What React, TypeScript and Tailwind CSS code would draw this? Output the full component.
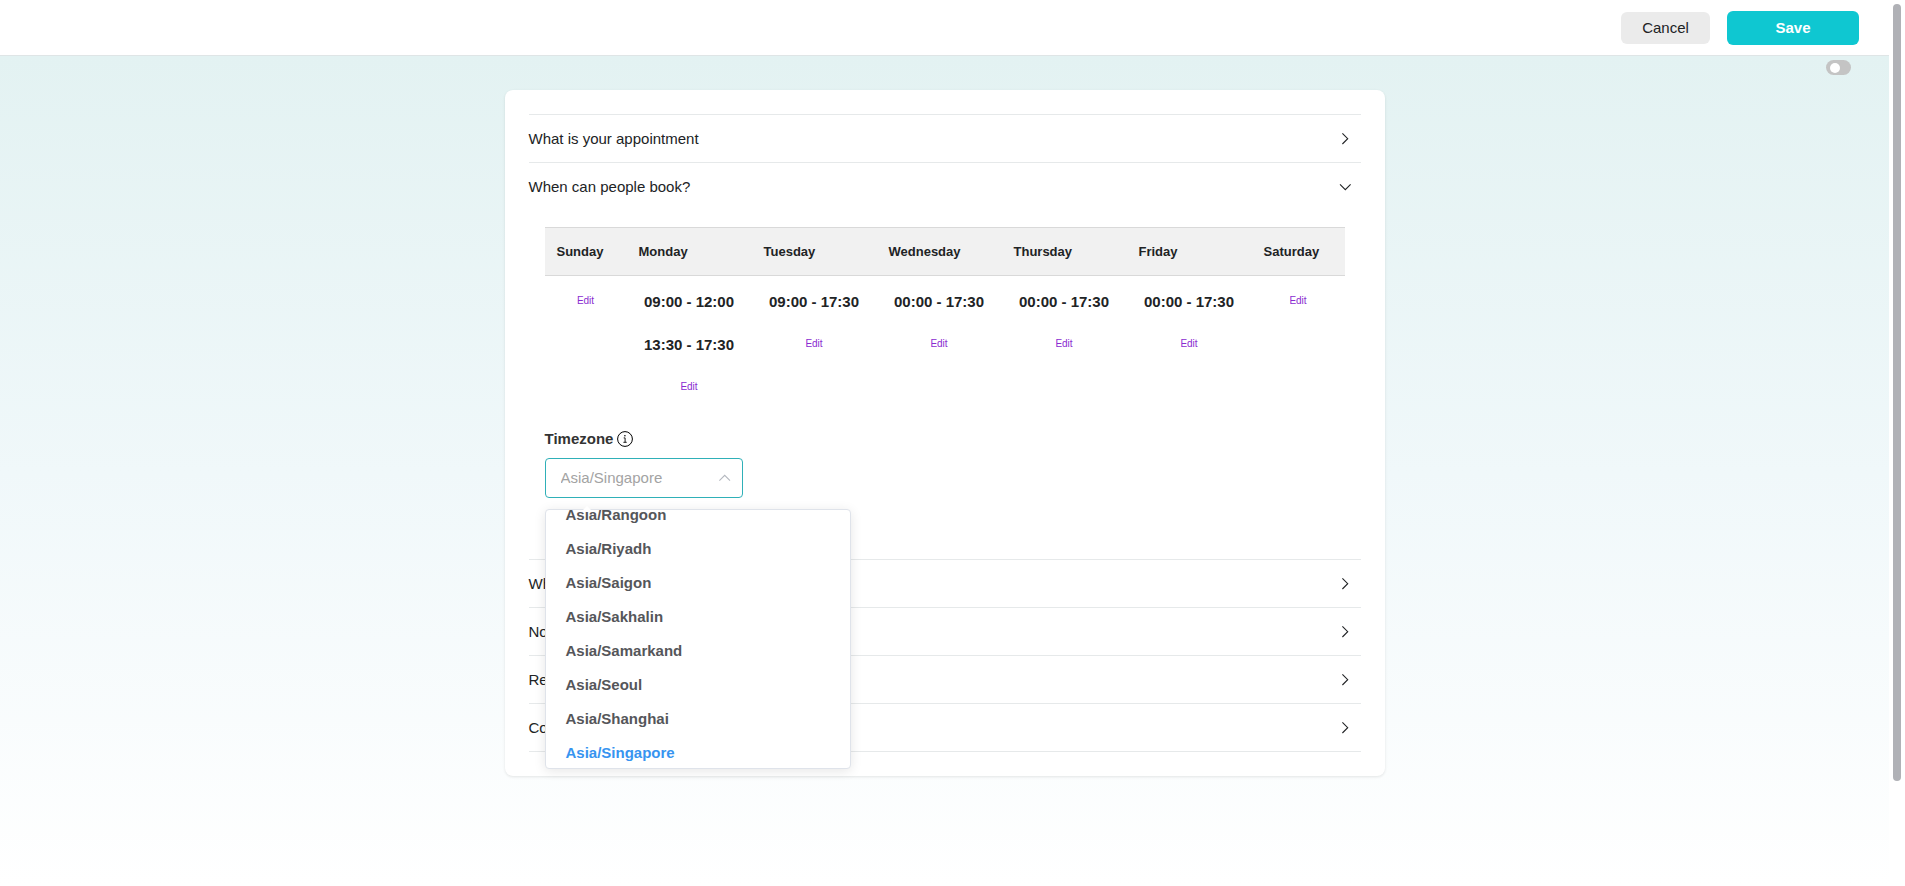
import { useEffect, useRef, useState } from 'react'

const schedule = [
  { day: 'Sunday', width: 'w-[82px]', slots: [] },
  { day: 'Monday', width: 'w-[125px]', slots: ['09:00 - 12:00', '13:30 - 17:30'] },
  { day: 'Tuesday', width: 'w-[125px]', slots: ['09:00 - 17:30'] },
  { day: 'Wednesday', width: 'w-[125px]', slots: ['00:00 - 17:30'] },
  { day: 'Thursday', width: 'w-[125px]', slots: ['00:00 - 17:30'] },
  { day: 'Friday', width: 'w-[125px]', slots: ['00:00 - 17:30'] },
  { day: 'Saturday', width: 'w-[93px]', slots: [] },
]

const timezones = [
  'Asia/Rangoon',
  'Asia/Riyadh',
  'Asia/Saigon',
  'Asia/Sakhalin',
  'Asia/Samarkand',
  'Asia/Seoul',
  'Asia/Shanghai',
  'Asia/Singapore',
]

const Chevron = ({ className = '' }: { className?: string }) => (
  <svg
    viewBox="0 0 16 16"
    className={`w-4 h-4 ${className}`}
    fill="none"
    stroke="currentColor"
    strokeWidth="1.1"
    aria-hidden="true"
  >
    <path d="M5.4 2.4 10.7 7.7l-5.3 5.3" />
  </svg>
)

const InfoIcon = () => (
  <svg
    viewBox="0 0 16 16"
    className="w-4 h-4 text-black"
    fill="none"
    stroke="currentColor"
    aria-hidden="true"
  >
    <circle cx="8" cy="8" r="7.4" strokeWidth="1" />
    <path d="M6.7 6.9h1.4v4.3M6.4 11.3h3.3" strokeWidth="0.9" />
    <circle cx="7.9" cy="4.8" r="0.8" fill="currentColor" stroke="none" />
  </svg>
)

type SectionProps = {
  title: string
  open?: boolean
  children?: React.ReactNode
}

const Section = ({ title, open = false, children }: SectionProps) => (
  <section className="border-t border-[#e6e9ea]">
    <button
      type="button"
      aria-expanded={open}
      className="w-full h-[47px] pr-2 flex items-center justify-between text-left"
    >
      <span className="pt-0.5">{title}</span>
      <Chevron className={open ? 'rotate-90' : ''} />
    </button>
    {open && children}
  </section>
)

const ScheduleTable = () => (
  <table className="w-full table-fixed">
    <thead>
      <tr className="h-12 bg-[#f1f1f1] border-y border-[#d9d9d9]">
        {schedule.map(({ day, width }) => (
          <th key={day} className={`${width} pl-3 text-left text-[13px] font-bold`}>
            {day}
          </th>
        ))}
      </tr>
    </thead>
    <tbody>
      <tr>
        {schedule.map(({ day, slots }) => (
          <td key={day} className="pt-3 align-top text-center">
            <div className="flex flex-col items-center gap-[15px]">
              {slots.map((slot) => (
                <p key={slot} className="h-7 leading-7 font-bold whitespace-nowrap">
                  {slot}
                </p>
              ))}
              <button type="button" className="h-6 text-[10px] text-[#8a2bd0]">
                Edit
              </button>
            </div>
          </td>
        ))}
      </tr>
    </tbody>
  </table>
)

const TimezoneSelect = () => {
  const [timezone, setTimezone] = useState('Asia/Singapore')
  const listRef = useRef<HTMLUListElement>(null)

  useEffect(() => {
    if (listRef.current) listRef.current.scrollTop = 12
  }, [])

  return (
    <div className="relative w-[198px] mt-[7px]">
      <select
        id="timezone"
        value={timezone}
        onChange={(e) => setTimezone(e.target.value)}
        className="block w-full h-10 pl-[15px] pr-8 appearance-none rounded border border-[#2fb0b8] bg-white text-[#a3a3a3] outline-none"
      >
        {timezones.map((zone) => (
          <option key={zone}>{zone}</option>
        ))}
      </select>
      <Chevron className="absolute right-2.5 top-3 -rotate-90 text-[#b4b8bf] pointer-events-none" />

      {/* DROPDOWN */}
      <div className="absolute z-10 left-0 top-[51px] w-[306px] rounded border border-[#dfe3ea] bg-white shadow-[0_2px_12px_rgba(0,0,0,0.1)]">
        <ul
          ref={listRef}
          role="listbox"
          aria-label="Timezones"
          className="h-[258px] overflow-y-auto [scrollbar-width:none]"
        >
          {timezones.map((zone) => (
            <li
              key={zone}
              role="option"
              aria-selected={zone === timezone}
              onClick={() => setTimezone(zone)}
              className={`h-[34px] px-5 leading-[34px] font-bold cursor-pointer ${
                zone === timezone ? 'text-[#3794f0]' : 'text-[#55565a]'
              }`}
            >
              {zone}
            </li>
          ))}
        </ul>
        <svg
          viewBox="0 0 12 6"
          className="absolute left-[35px] -top-1 w-3 h-1.5"
          aria-hidden="true"
        >
          <path d="M0 6 6 0l6 6z" fill="#fff" />
        </svg>
      </div>
    </div>
  )
}

const App = () => {
  const [enabled, setEnabled] = useState(false)

  return (
    <div className="flex min-h-screen bg-white font-['Liberation_Sans',Arial,sans-serif] text-[15px] text-[#212325]">
      <div className="flex-1 flex flex-col">
        <header className="flex items-center justify-end gap-[17px] h-14 pr-[30px] border-b border-[#dfe5e6]">
          <button type="button" className="w-[89px] h-8 pt-0.5 rounded-md bg-[#ebebeb]">
            Cancel
          </button>
          <button
            type="button"
            className="w-[132px] h-[34px] pt-0.5 rounded-md bg-[#0fc7d1] font-bold text-white"
          >
            Save
          </button>
        </header>

        <main className="flex-1 flex flex-col pb-10 bg-linear-to-b from-[#e3f2f2] via-[#f0f8fa] to-white">
          <label className="self-end mt-1 mr-[38px] flex w-[25px] h-[15px] px-1 items-center rounded-full bg-[#c4c4c4] cursor-pointer">
            <input
              type="checkbox"
              checked={enabled}
              onChange={(e) => setEnabled(e.target.checked)}
              aria-label="Enable appointment"
              className="peer sr-only"
            />
            <span className="w-2.5 h-2.5 rounded-full bg-white peer-checked:ml-[7px]" />
          </label>

          <div className="w-full max-w-[880px] mx-auto mt-[15px] px-6 py-6 rounded-lg bg-white shadow-[0_1px_3px_rgba(0,0,0,0.1)]">
            <div className="border-b border-[#e6e9ea]">
              <Section title="What is your appointment" />
              <Section title="When can people book?" open>
                <div className="px-4 pt-[17px] pb-[61px]">
                  <ScheduleTable />
                  <label
                    htmlFor="timezone"
                    className="mt-[29px] h-6 flex items-center gap-1 font-bold text-[#333]"
                  >
                    Timezone <InfoIcon />
                  </label>
                  <TimezoneSelect />
                </div>
              </Section>
              <Section title="Where to meet" />
              <Section title="Notifications" />
              <Section title="Reminders" />
              <Section title="Confirmation" />
            </div>
          </div>
        </main>
      </div>

      {/* SCROLLBAR */}
      <div className="w-4 h-screen py-1 flex justify-center">
        <div className="w-2 h-[88.5%] rounded-full bg-[#b0b1b6]" />
      </div>
    </div>
  )
}

export default App
